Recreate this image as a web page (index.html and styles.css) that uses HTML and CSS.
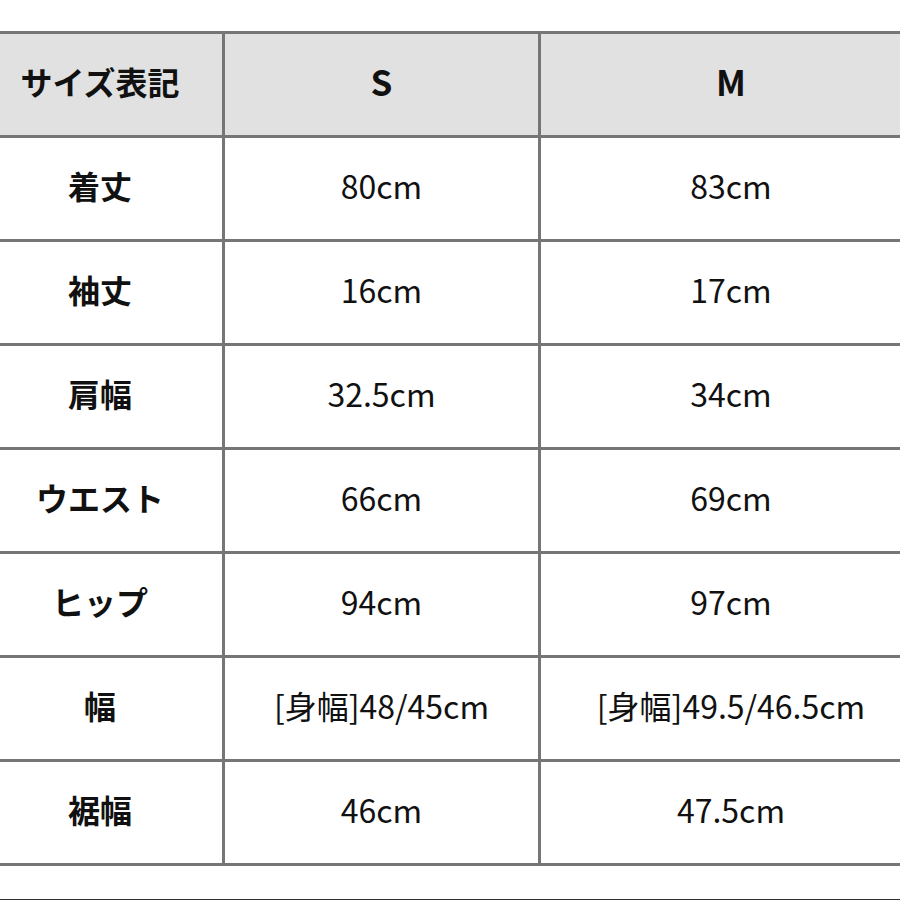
FILE: index.html
```html
<!DOCTYPE html>
<html lang="ja">
<head>
<meta charset="utf-8">
<link rel="stylesheet" href="styles.css">
</head>
<body>
<div class="sheet">
  <div class="size-table">
    <div class="cell head label">サイズ表記</div>
    <div class="cell head size">S</div>
    <div class="cell head size">M</div>

    <div class="cell label">着丈</div>
    <div class="cell value">80cm</div>
    <div class="cell value">83cm</div>

    <div class="cell label">袖丈</div>
    <div class="cell value">16cm</div>
    <div class="cell value">17cm</div>

    <div class="cell label">肩幅</div>
    <div class="cell value">32.5cm</div>
    <div class="cell value">34cm</div>

    <div class="cell label">ウエスト</div>
    <div class="cell value">66cm</div>
    <div class="cell value">69cm</div>

    <div class="cell label">ヒップ</div>
    <div class="cell value">94cm</div>
    <div class="cell value">97cm</div>

    <div class="cell label">幅</div>
    <div class="cell value">[身幅]48/45cm</div>
    <div class="cell value">[身幅]49.5/46.5cm</div>

    <div class="cell label">裾幅</div>
    <div class="cell value">46cm</div>
    <div class="cell value">47.5cm</div>
  </div>
  <div class="rule"></div>
</div>
</body>
</html>
```

FILE: styles.css
```css
html, body {
  margin: 0;
  padding: 0;
  background: #ffffff;
  overflow: hidden;
}

.sheet {
  width: 900px;
  height: 900px;
  overflow: hidden;
  padding-top: 31px;
  box-sizing: border-box;
}

.size-table {
  display: grid;
  grid-template-columns: 244px 313px 380px;
  grid-auto-rows: 101px;
  gap: 3px;
  padding: 3px 0;
  margin-left: -22px;
  width: 943px;
  background: #767676;
  font-family: "Noto Sans CJK JP", "Noto Sans", sans-serif;
  color: #111111;
}

.cell {
  background: #ffffff;
  display: flex;
  align-items: center;
  justify-content: center;
  white-space: nowrap;
  padding-bottom: 8px;
  box-sizing: border-box;
}

.cell.head {
  background: #e2e1e2;
}

.label {
  font-size: 32px;
  font-weight: 700;
}

.size {
  font-size: 35px;
  font-weight: 700;
}

.value {
  font-size: 32px;
  font-weight: 400;
}

.rule {
  margin-top: 33px;
  height: 2px;
  background: #2f2f2f;
}
```
